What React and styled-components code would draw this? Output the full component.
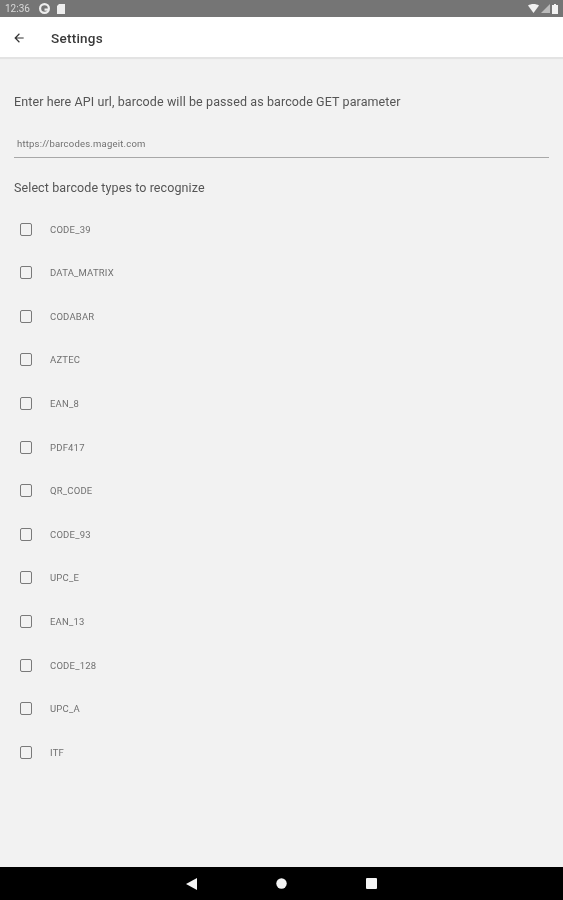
import React from 'react';
import styled, { createGlobalStyle } from 'styled-components';
import { MdArrowBack } from 'react-icons/md';

const GlobalStyle = createGlobalStyle`
  html, body {
    margin: 0;
    padding: 0;
    background: #f2f2f2;
  }

  * {
    box-sizing: border-box;
  }
`;

const Page = styled.div`
  width: 563px;
  height: 900px;
  display: flex;
  flex-direction: column;
  overflow: hidden;
  font-family: Roboto, 'Liberation Sans', sans-serif;
  background: #f2f2f2;
  filter: blur(0.35px);
`;

const StatusBar = styled.div`
  height: 17px;
  flex: none;
  display: flex;
  align-items: center;
  justify-content: space-between;
  padding: 0 5px 0 5px;
  background: #757575;
  color: #d8d8d8;
`;

const StatusGroup = styled.div`
  display: flex;
  align-items: center;
  gap: ${(p) => p.$gap || 7}px;
`;

const Clock = styled.span`
  font-size: 10px;
  margin-right: 2px;
`;

const Toolbar = styled.header`
  height: 41px;
  flex: none;
  display: flex;
  align-items: center;
  padding: 1px 0 0 12px;
  background: #fff;
  border-bottom: 1px solid #e3e3e3;
  box-shadow: 0 1px 1px rgba(0, 0, 0, 0.06);
`;

const Title = styled.h1`
  margin: 1px 0 0 25px;
  font-size: 13.5px;
  font-weight: 500;
  letter-spacing: 0.25px;
  color: #3a3a3a;
`;

const Content = styled.main`
  flex: 1;
  padding: 37px 14px 0;
`;

const Label = styled.p`
  margin: 0;
  font-size: 12.5px;
  line-height: 14px;
  letter-spacing: 0.1px;
  color: #555;
`;

const UrlField = styled.div`
  height: 27px;
  margin: 22px 0 23px;
  padding: 7px 0 0 3px;
  font-size: 9.5px;
  line-height: 12px;
  letter-spacing: 0.2px;
  color: #707070;
  border-bottom: 1px solid #a8a8a8;
`;

const TypeList = styled.ul`
  list-style: none;
  margin: 12.3px 0 0;
  padding: 0;
`;

const TypeRow = styled.li`
  height: 43.6px;
  display: flex;
  align-items: center;
  padding-left: 5.5px;
  gap: 18px;
  font-size: 9.5px;
  letter-spacing: 0.2px;
  color: #707070;
`;

const Box = styled.span`
  width: 12.5px;
  height: 13px;
  flex: none;
  border: 1.5px solid #7a7a7a;
  border-radius: 2px;
`;

const NavBar = styled.nav`
  height: 33px;
  flex: none;
  display: flex;
  align-items: center;
  justify-content: center;
  gap: 79px;
  background: #000;
  padding-right: 1px;
`;

const TYPES = [
  'CODE_39',
  'DATA_MATRIX',
  'CODABAR',
  'AZTEC',
  'EAN_8',
  'PDF417',
  'QR_CODE',
  'CODE_93',
  'UPC_E',
  'EAN_13',
  'CODE_128',
  'UPC_A',
  'ITF',
];

const App = () => (
  <Page>
    <GlobalStyle />
    <StatusBar>
      <StatusGroup>
        <Clock>12:36</Clock>
        <svg width="11" height="11" viewBox="0 0 10 10">
          <circle cx="5" cy="5" r="4" fill="none" stroke="#eee" strokeWidth="2" />
          <path d="M5 5h4v2H5z" fill="#eee" />
        </svg>
        <svg width="8" height="10" viewBox="0 0 8 10">
          <path d="M2 0h6v10H0V2z" fill="#eee" />
        </svg>
      </StatusGroup>
      <StatusGroup $gap={2}>
        <svg width="11" height="9" viewBox="0 0 11 9">
          <path d="M0 1.5C3-.5 8-.5 11 1.5L5.5 9z" fill="#f2f2f2" />
        </svg>
        <svg width="9" height="9" viewBox="0 0 9 9">
          <path d="M9 0v9H0z" fill="#bbb" />
        </svg>
        <svg width="6" height="10" viewBox="0 0 6 10">
          <path d="M2 0h2v1h2v9H0V1h2z" fill="#f2f2f2" />
        </svg>
      </StatusGroup>
    </StatusBar>
    <Toolbar>
      <MdArrowBack size={14} color="#333" />
      <Title>Settings</Title>
    </Toolbar>
    <Content>
      <Label>Enter here API url, barcode will be passed as barcode GET parameter</Label>
      <UrlField>https://barcodes.mageit.com</UrlField>
      <Label>Select barcode types to recognize</Label>
      <TypeList>
        {TYPES.map((type) => (
          <TypeRow key={type}>
            <Box />
            {type}
          </TypeRow>
        ))}
      </TypeList>
    </Content>
    <NavBar>
      <svg width="11" height="12" viewBox="0 0 11 12">
        <path d="M11 0v12L0 6z" fill="#f5f5f5" />
      </svg>
      <svg width="11" height="11" viewBox="0 0 11 11">
        <circle cx="5.5" cy="5.5" r="5.2" fill="#f5f5f5" />
      </svg>
      <svg width="11" height="11" viewBox="0 0 11 11">
        <rect width="11" height="11" rx="1" fill="#f5f5f5" />
      </svg>
    </NavBar>
  </Page>
);

export default App;
